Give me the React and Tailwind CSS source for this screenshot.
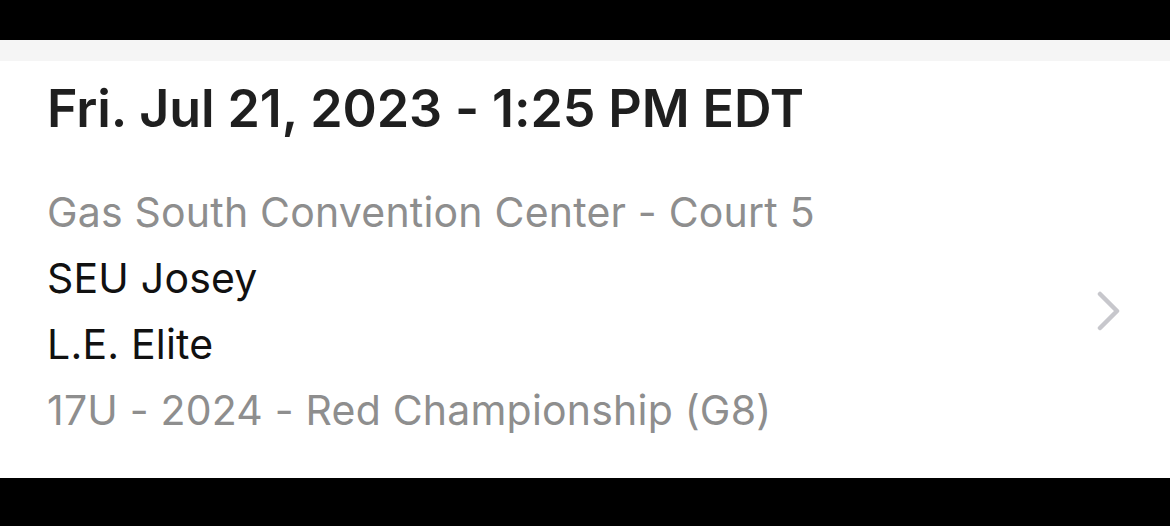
import React from 'react';

export default function App() {
  const game = {
    when: 'Fri. Jul 21, 2023 - 1:25 PM EDT',
    venue: 'Gas South Convention Center - Court 5',
    home: 'SEU Josey',
    away: 'L.E. Elite',
    division: '17U - 2024 - Red Championship (G8)',
  };

  return (
    <div className="w-[1170px] h-[526px] flex flex-col bg-black" style={{ fontFamily: 'Inter, "Noto Sans", sans-serif' }}>
      <div className="h-[40px] bg-black" />
      <div className="h-[21px] bg-[#f5f5f5]" />
      <div className="h-[417px] bg-white pl-[47px] pr-[48px] pt-[18px] flex flex-col">
        <h1 className="text-[52px] leading-[60px] font-semibold text-[#1f1f1f] tracking-[-0.1px]">{game.when}</h1>
        <div className="flex items-center mt-[40px]">
          <div className="flex-1 flex flex-col text-[41px] leading-[66px] tracking-[0.2px]">
            <p className="text-[#8e8e8e]">{game.venue}</p>
            <p className="text-[#111]">{game.home}</p>
            <p className="text-[#111]">{game.away}</p>
            <p className="text-[#8e8e8e]">{game.division}</p>
          </div>
          <svg width="26" height="40" viewBox="0 0 26 40">
            <path d="M4 3 L21 20 L4 37" fill="none" stroke="#c7c7cc" strokeWidth="4.5" strokeLinecap="round" strokeLinejoin="round" />
          </svg>
        </div>
      </div>
      <div className="h-[48px] bg-black" />
    </div>
  );
}
